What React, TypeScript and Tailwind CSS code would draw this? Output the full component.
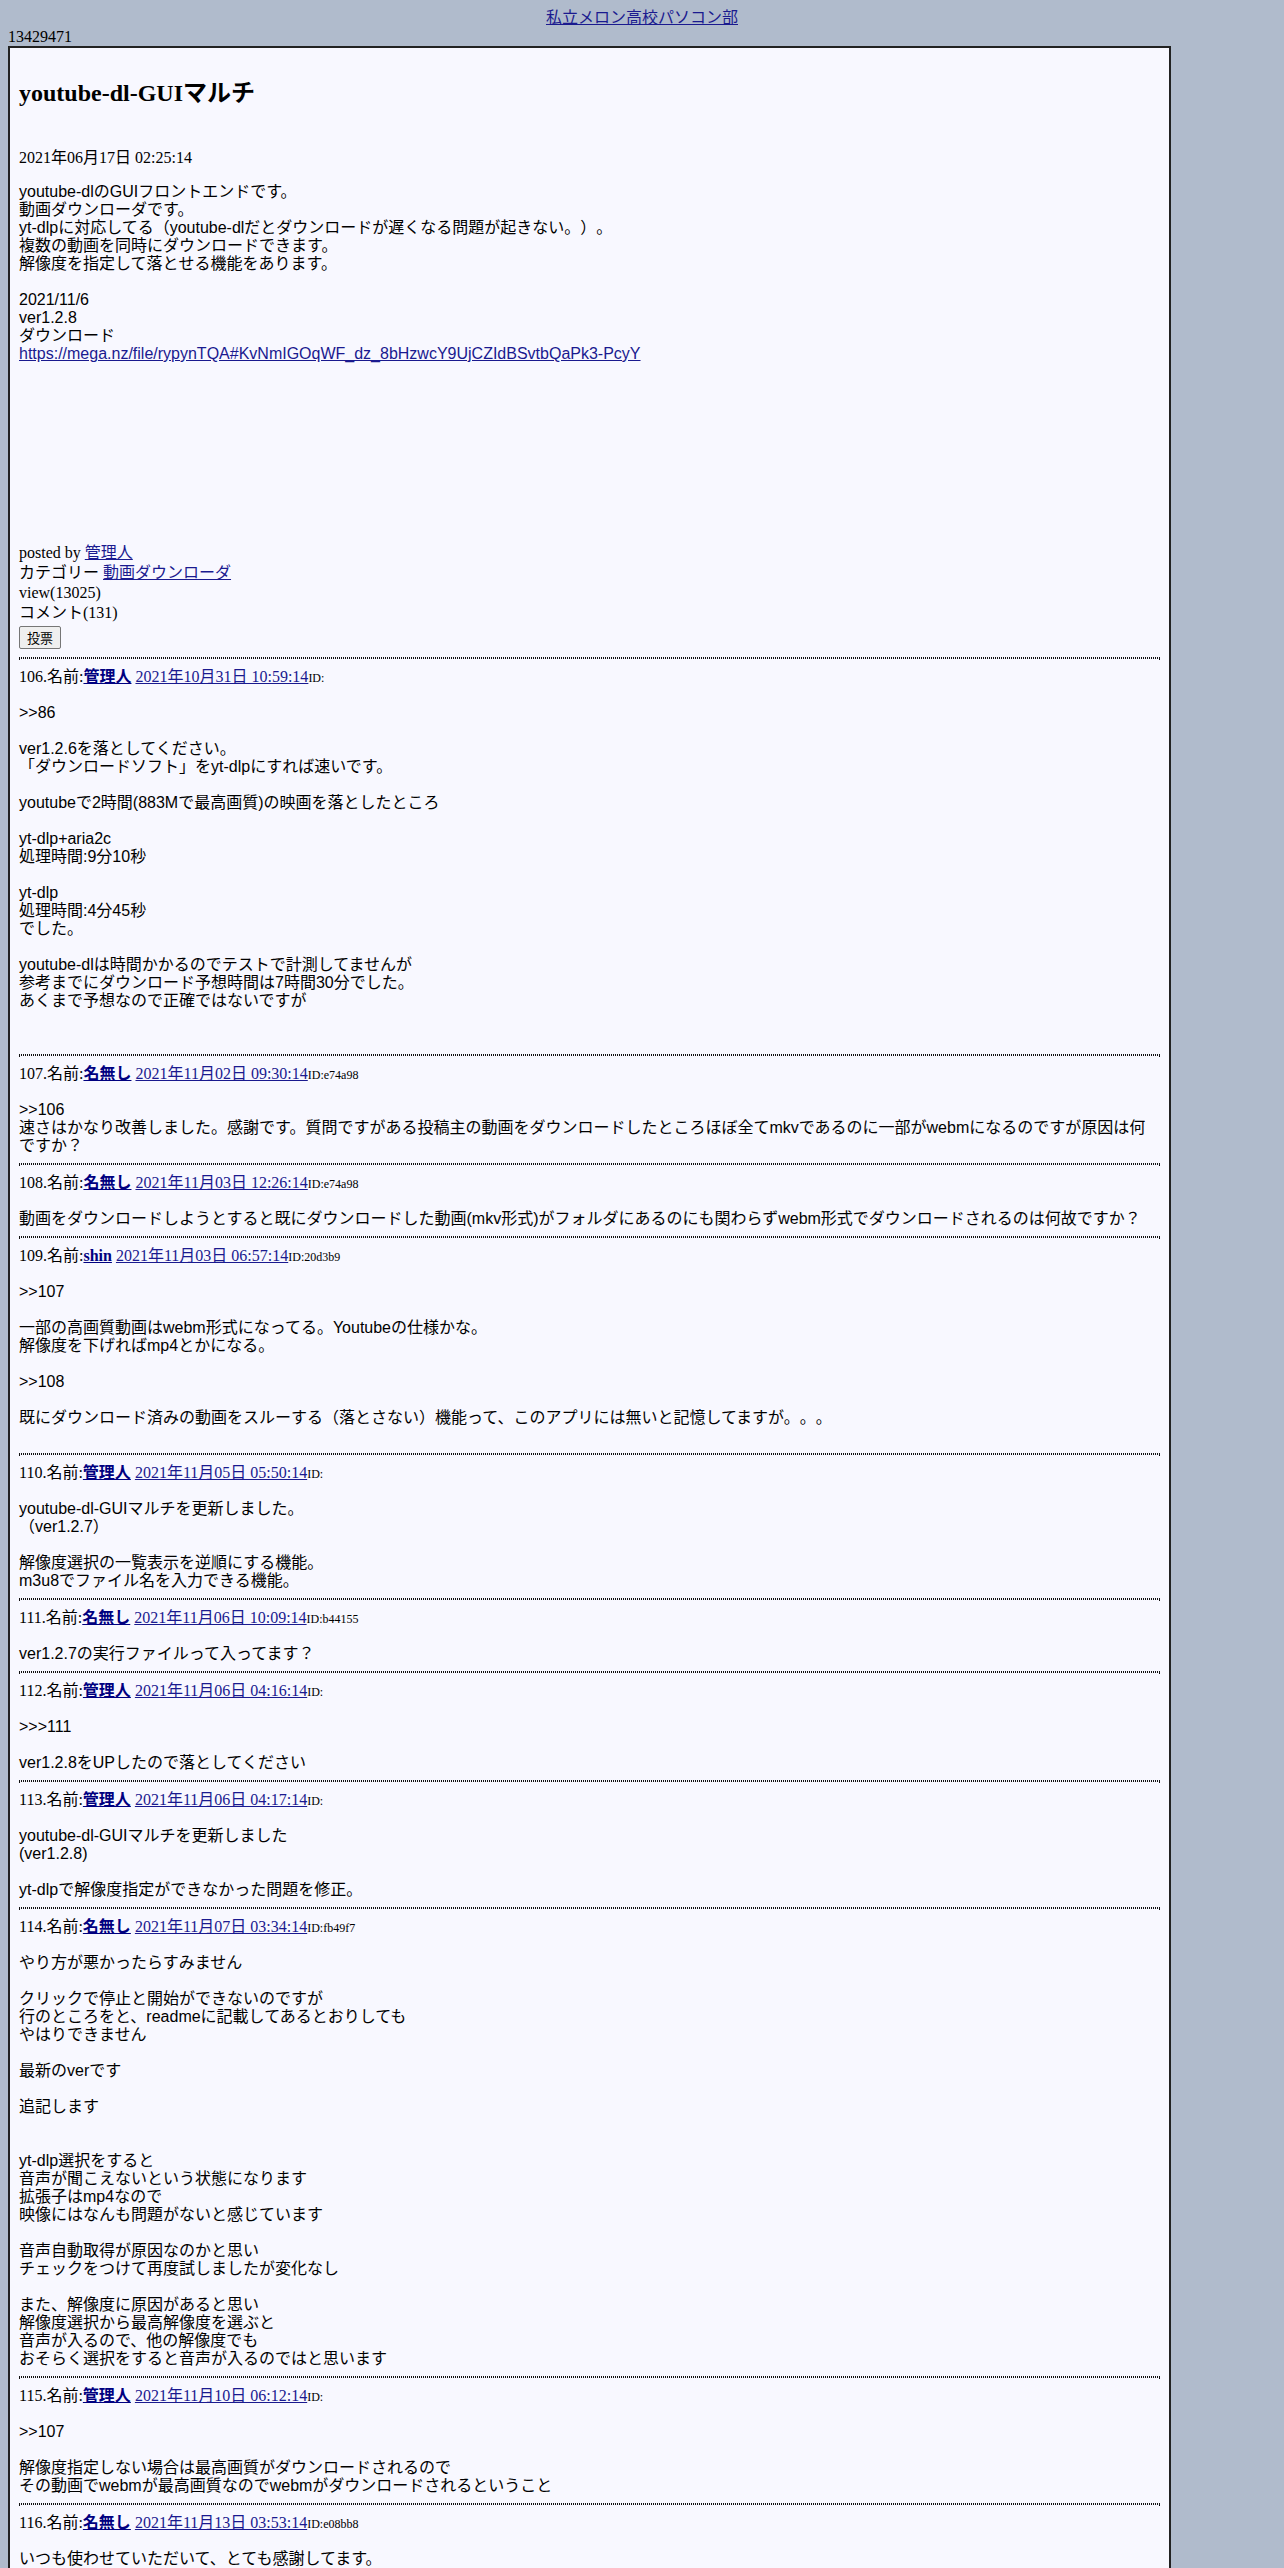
import React from "react";

type Comment = {
  no: number;
  name: string;
  date: string;
  id: string;
  lines: string[];
};

const sans = "font-[family-name:Liberation_Sans,Noto_Sans_CJK_JP,sans-serif]";

const post = [
  "youtube-dlのGUIフロントエンドです。",
  "動画ダウンローダです。",
  "yt-dlpに対応してる（youtube-dlだとダウンロードが遅くなる問題が起きない。）。",
  "複数の動画を同時にダウンロードできます。",
  "解像度を指定して落とせる機能をあります。",
  "",
  "2021/11/6",
  "ver1.2.8",
  "ダウンロード",
];

const comments: Comment[] = [
  {
    no: 106,
    name: "管理人",
    date: "2021年10月31日 10:59:14",
    id: "",
    lines: [
      "",
      ">>86",
      "",
      "ver1.2.6を落としてください。",
      "「ダウンロードソフト」をyt-dlpにすれば速いです。",
      "",
      "youtubeで2時間(883Mで最高画質)の映画を落としたところ",
      "",
      "yt-dlp+aria2c",
      "処理時間:9分10秒",
      "",
      "yt-dlp",
      "処理時間:4分45秒",
      "でした。",
      "",
      "youtube-dlは時間かかるのでテストで計測してませんが",
      "参考までにダウンロード予想時間は7時間30分でした。",
      "あくまで予想なので正確ではないですが",
      "",
      "",
    ],
  },
  {
    no: 107,
    name: "名無し",
    date: "2021年11月02日 09:30:14",
    id: "e74a98",
    lines: [
      "",
      ">>106",
      "速さはかなり改善しました。感謝です。質問ですがある投稿主の動画をダウンロードしたところほぼ全てmkvであるのに一部がwebmになるのですが原因は何",
      "ですか？",
    ],
  },
  {
    no: 108,
    name: "名無し",
    date: "2021年11月03日 12:26:14",
    id: "e74a98",
    lines: [
      "",
      "動画をダウンロードしようとすると既にダウンロードした動画(mkv形式)がフォルダにあるのにも関わらずwebm形式でダウンロードされるのは何故ですか？",
    ],
  },
  {
    no: 109,
    name: "shin",
    date: "2021年11月03日 06:57:14",
    id: "20d3b9",
    lines: [
      "",
      ">>107",
      "",
      "一部の高画質動画はwebm形式になってる。Youtubeの仕様かな。",
      "解像度を下げればmp4とかになる。",
      "",
      ">>108",
      "",
      "既にダウンロード済みの動画をスルーする（落とさない）機能って、このアプリには無いと記憶してますが。。。",
      "",
    ],
  },
  {
    no: 110,
    name: "管理人",
    date: "2021年11月05日 05:50:14",
    id: "",
    lines: [
      "",
      "youtube-dl-GUIマルチを更新しました。",
      "（ver1.2.7）",
      "",
      "解像度選択の一覧表示を逆順にする機能。",
      "m3u8でファイル名を入力できる機能。",
    ],
  },
  {
    no: 111,
    name: "名無し",
    date: "2021年11月06日 10:09:14",
    id: "b44155",
    lines: ["", "ver1.2.7の実行ファイルって入ってます？"],
  },
  {
    no: 112,
    name: "管理人",
    date: "2021年11月06日 04:16:14",
    id: "",
    lines: ["", ">>>111", "", "ver1.2.8をUPしたので落としてください"],
  },
  {
    no: 113,
    name: "管理人",
    date: "2021年11月06日 04:17:14",
    id: "",
    lines: [
      "",
      "youtube-dl-GUIマルチを更新しました",
      "(ver1.2.8)",
      "",
      "yt-dlpで解像度指定ができなかった問題を修正。",
    ],
  },
  {
    no: 114,
    name: "名無し",
    date: "2021年11月07日 03:34:14",
    id: "fb49f7",
    lines: [
      "",
      "やり方が悪かったらすみません",
      "",
      "クリックで停止と開始ができないのですが",
      "行のところをと、readmeに記載してあるとおりしても",
      "やはりできません",
      "",
      "最新のverです",
      "",
      "追記します",
      "",
      "",
      "yt-dlp選択をすると",
      "音声が聞こえないという状態になります",
      "拡張子はmp4なので",
      "映像にはなんも問題がないと感じています",
      "",
      "音声自動取得が原因なのかと思い",
      "チェックをつけて再度試しましたが変化なし",
      "",
      "また、解像度に原因があると思い",
      "解像度選択から最高解像度を選ぶと",
      "音声が入るので、他の解像度でも",
      "おそらく選択をすると音声が入るのではと思います",
    ],
  },
  {
    no: 115,
    name: "管理人",
    date: "2021年11月10日 06:12:14",
    id: "",
    lines: [
      "",
      ">>107",
      "",
      "解像度指定しない場合は最高画質がダウンロードされるので",
      "その動画でwebmが最高画質なのでwebmがダウンロードされるということ",
    ],
  },
  {
    no: 116,
    name: "名無し",
    date: "2021年11月13日 03:53:14",
    id: "e08bb8",
    lines: ["", "いつも使わせていただいて、とても感謝してます。", ""],
  },
];

function CommentBlock({ c }: { c: Comment }) {
  return (
    <div>
      <hr className="mt-2 mb-[9px] h-0 border border-dotted border-[#111]" />
      <div className="h-[18px] leading-[18px] whitespace-nowrap">
        {c.no}.名前:
        <a href="#" className="font-bold text-[#000080] underline">
          {c.name}
        </a>{" "}
        <a href="#" className="text-[#1a1a8f] underline">
          {c.date}
        </a>
        <span className="text-[12px]">ID:{c.id}</span>
      </div>
      <div className={`${sans} text-[16px]`}>
        {c.lines.map((line, i) => (
          <div key={i} className="h-[18px] leading-[18px] whitespace-nowrap">
            {line}
          </div>
        ))}
      </div>
    </div>
  );
}

export default function App() {
  return (
    <div className="min-h-screen bg-[#b0bbcc] p-2 font-[family-name:Liberation_Serif,Noto_Sans_CJK_JP,serif] text-[16px] text-black [text-spacing-trim:space-all]">
      <div className="h-[20px] text-center leading-[20px]">
        <a href="#" className="text-[#1a1a8f] underline">
          私立メロン高校パソコン部
        </a>
      </div>
      <div className="h-[18px] leading-[18px]">13429471</div>

      <div className="w-[1163px] border-2 border-[#222] bg-[#f8f8ff] px-[9px] pt-[9px] pb-[9px]">
        <h2 className="mt-[22px] h-[28px] text-[24px] leading-[28px] font-bold">youtube-dl-GUIマルチ</h2>
        <div className="mt-[42px] h-[18px] leading-[18px]">2021年06月17日 02:25:14</div>

        {/* post body */}
        <div className={`${sans} mt-4`}>
          {post.map((line, i) => (
            <div key={i} className="h-[18px] leading-[18px]">
              {line}
            </div>
          ))}
          <div className="h-[18px] leading-[18px]">
            <a href="#" className="text-[#1a1a8f] underline">
              https://mega.nz/file/rypynTQA#KvNmIGOqWF_dz_8bHzwcY9UjCZIdBSvtbQaPk3-PcyY
            </a>
          </div>
        </div>

        <div className="h-[180px]" />

        <div className="leading-[20px]">
          <div className="h-[20px]">
            posted by{" "}
            <a href="#" className="text-[#1a1a8f] underline">
              管理人
            </a>
          </div>
          <div className="h-[20px]">
            カテゴリー{" "}
            <a href="#" className="text-[#1a1a8f] underline">
              動画ダウンローダ
            </a>
          </div>
          <div className="h-[20px]">view(13025)</div>
          <div className="h-[20px]">コメント(131)</div>
        </div>
        <button className="mt-[3px] flex h-[23px] w-[42px] items-center justify-center rounded-[2px] border border-[#767676] bg-[#efefef] font-[family-name:Noto_Sans_CJK_JP,sans-serif] text-[13px] text-black">
          投票
        </button>

        {comments.map((c) => (
          <CommentBlock key={c.no} c={c} />
        ))}
      </div>
    </div>
  );
}
